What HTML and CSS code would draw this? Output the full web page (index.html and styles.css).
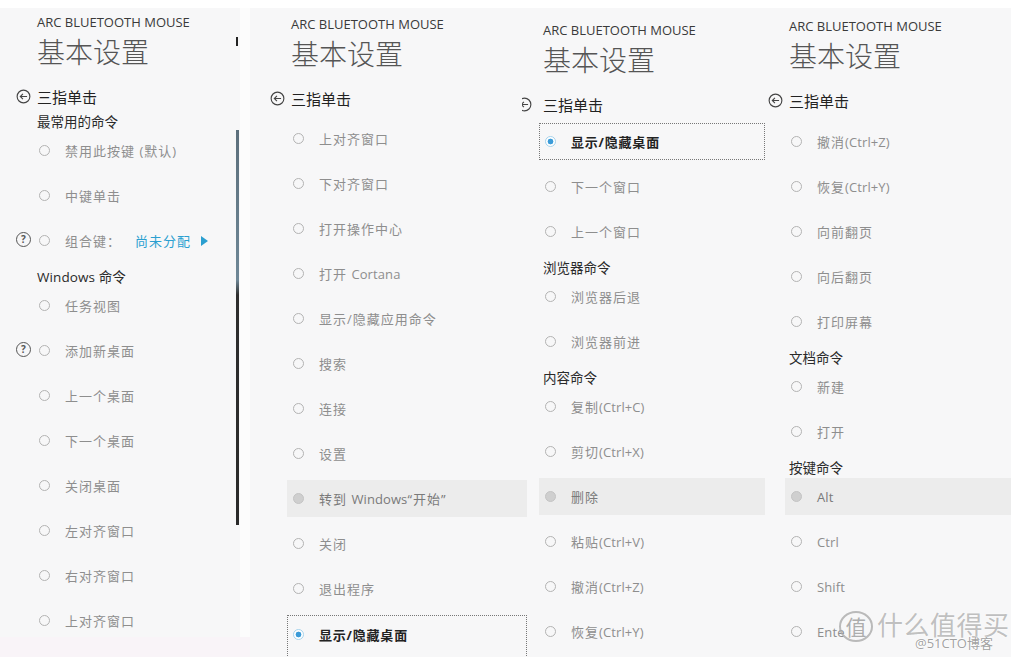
FILE: index.html
```html
<!DOCTYPE html>
<html lang="zh-CN">
<head>
<meta charset="utf-8">
<title>ARC BLUETOOTH MOUSE 基本设置</title>
<link rel="stylesheet" href="styles.css">
</head>
<body>
<div class="topstrip"></div>
<div class="collage">

  <!-- Panel 1 -->
  <section class="panel p1">
    <div class="sheet">
      <div class="dev">ARC BLUETOOTH MOUSE</div>
      <h1 class="page">基本设置</h1>
      <div class="back"><svg class="back-ico" viewBox="0 0 16 16"><circle cx="8" cy="8" r="6.8"/><path d="M11.8 8H4.6M7.4 5.2 4.6 8l2.8 2.8"/></svg><span>三指单击</span></div>
      <ul class="list">
        <li class="group">最常用的命令</li>
        <li class="item"><div class="box"><span class="radio"></span><span class="label">禁用此按键 (默认)</span></div></li>
        <li class="item"><div class="box"><span class="radio"></span><span class="label">中键单击</span></div></li>
        <li class="item"><span class="help">?</span><div class="box"><span class="radio"></span><span class="label">组合键：</span><span class="assign">尚未分配</span><span class="tri"></span></div></li>
        <li class="group"><span class="en">Windows</span> 命令</li>
        <li class="item"><div class="box"><span class="radio"></span><span class="label">任务视图</span></div></li>
        <li class="item"><span class="help">?</span><div class="box"><span class="radio"></span><span class="label">添加新桌面</span></div></li>
        <li class="item"><div class="box"><span class="radio"></span><span class="label">上一个桌面</span></div></li>
        <li class="item"><div class="box"><span class="radio"></span><span class="label">下一个桌面</span></div></li>
        <li class="item"><div class="box"><span class="radio"></span><span class="label">关闭桌面</span></div></li>
        <li class="item"><div class="box"><span class="radio"></span><span class="label">左对齐窗口</span></div></li>
        <li class="item"><div class="box"><span class="radio"></span><span class="label">右对齐窗口</span></div></li>
        <li class="item"><div class="box"><span class="radio"></span><span class="label">上对齐窗口</span></div></li>
      </ul>
      <div class="mark"></div>
      <div class="scrollbar"></div>
    </div>
  </section>

  <!-- Panel 2 -->
  <section class="panel p2">
    <div class="dev">ARC BLUETOOTH MOUSE</div>
    <h1 class="page">基本设置</h1>
    <div class="back"><svg class="back-ico" viewBox="0 0 16 16"><circle cx="8" cy="8" r="6.8"/><path d="M11.8 8H4.6M7.4 5.2 4.6 8l2.8 2.8"/></svg><span>三指单击</span></div>
    <ul class="list">
      <li class="item"><div class="box"><span class="radio"></span><span class="label">上对齐窗口</span></div></li>
      <li class="item"><div class="box"><span class="radio"></span><span class="label">下对齐窗口</span></div></li>
      <li class="item"><div class="box"><span class="radio"></span><span class="label">打开操作中心</span></div></li>
      <li class="item"><div class="box"><span class="radio"></span><span class="label">打开 <span class="en">Cortana</span></span></div></li>
      <li class="item"><div class="box"><span class="radio"></span><span class="label">显示/隐藏应用命令</span></div></li>
      <li class="item"><div class="box"><span class="radio"></span><span class="label">搜索</span></div></li>
      <li class="item"><div class="box"><span class="radio"></span><span class="label">连接</span></div></li>
      <li class="item"><div class="box"><span class="radio"></span><span class="label">设置</span></div></li>
      <li class="item hover"><div class="box"><span class="radio"></span><span class="label">转到 <span class="en">Windows</span>“开始”</span></div></li>
      <li class="item"><div class="box"><span class="radio"></span><span class="label">关闭</span></div></li>
      <li class="item"><div class="box"><span class="radio"></span><span class="label">退出程序</span></div></li>
      <li class="item selected cut"><div class="box"><span class="radio"></span><span class="label">显示/隐藏桌面</span></div></li>
    </ul>
  </section>

  <!-- Panel 3 -->
  <section class="panel p3">
    <div class="dev">ARC BLUETOOTH MOUSE</div>
    <h1 class="page">基本设置</h1>
    <div class="back"><svg class="back-ico" viewBox="0 0 16 16"><circle cx="8" cy="8" r="6.8"/><path d="M11.8 8H4.6M7.4 5.2 4.6 8l2.8 2.8"/></svg><span>三指单击</span></div>
    <ul class="list">
      <li class="item selected"><div class="box"><span class="radio"></span><span class="label">显示/隐藏桌面</span></div></li>
      <li class="item"><div class="box"><span class="radio"></span><span class="label">下一个窗口</span></div></li>
      <li class="item"><div class="box"><span class="radio"></span><span class="label">上一个窗口</span></div></li>
      <li class="group">浏览器命令</li>
      <li class="item"><div class="box"><span class="radio"></span><span class="label">浏览器后退</span></div></li>
      <li class="item"><div class="box"><span class="radio"></span><span class="label">浏览器前进</span></div></li>
      <li class="group">内容命令</li>
      <li class="item"><div class="box"><span class="radio"></span><span class="label">复制<span class="en">(Ctrl+C)</span></span></div></li>
      <li class="item"><div class="box"><span class="radio"></span><span class="label">剪切<span class="en">(Ctrl+X)</span></span></div></li>
      <li class="item hover"><div class="box"><span class="radio"></span><span class="label">删除</span></div></li>
      <li class="item"><div class="box"><span class="radio"></span><span class="label">粘贴<span class="en">(Ctrl+V)</span></span></div></li>
      <li class="item"><div class="box"><span class="radio"></span><span class="label">撤消<span class="en">(Ctrl+Z)</span></span></div></li>
      <li class="item"><div class="box"><span class="radio"></span><span class="label">恢复<span class="en">(Ctrl+Y)</span></span></div></li>
    </ul>
  </section>

  <!-- Panel 4 -->
  <section class="panel p4">
    <div class="dev">ARC BLUETOOTH MOUSE</div>
    <h1 class="page">基本设置</h1>
    <div class="back"><svg class="back-ico" viewBox="0 0 16 16"><circle cx="8" cy="8" r="6.8"/><path d="M11.8 8H4.6M7.4 5.2 4.6 8l2.8 2.8"/></svg><span>三指单击</span></div>
    <ul class="list">
      <li class="item"><div class="box"><span class="radio"></span><span class="label">撤消<span class="en">(Ctrl+Z)</span></span></div></li>
      <li class="item"><div class="box"><span class="radio"></span><span class="label">恢复<span class="en">(Ctrl+Y)</span></span></div></li>
      <li class="item"><div class="box"><span class="radio"></span><span class="label">向前翻页</span></div></li>
      <li class="item"><div class="box"><span class="radio"></span><span class="label">向后翻页</span></div></li>
      <li class="item"><div class="box"><span class="radio"></span><span class="label">打印屏幕</span></div></li>
      <li class="group">文档命令</li>
      <li class="item"><div class="box"><span class="radio"></span><span class="label">新建</span></div></li>
      <li class="item"><div class="box"><span class="radio"></span><span class="label">打开</span></div></li>
      <li class="group">按键命令</li>
      <li class="item hover"><div class="box"><span class="radio"></span><span class="label"><span class="en">Alt</span></span></div></li>
      <li class="item"><div class="box"><span class="radio"></span><span class="label"><span class="en">Ctrl</span></span></div></li>
      <li class="item"><div class="box"><span class="radio"></span><span class="label"><span class="en">Shift</span></span></div></li>
      <li class="item"><div class="box"><span class="radio"></span><span class="label"><span class="en">Ente</span></span></div></li>
    </ul>
    <div class="wm-circle">值</div>
    <div class="wm-text">什么值得买</div>
    <div class="wm-sub">@51CTO博客</div>
  </section>

</div>
</body>
</html>
```

FILE: styles.css
```css
* { box-sizing: border-box; }

html, body {
  margin: 0;
  padding: 0;
}

body {
  width: 1011px;
  height: 657px;
  overflow: hidden;
  background: #f7f7f8;
  font-family: "Open Sans", "Noto Sans CJK SC", sans-serif;
  color: #333;
}

.topstrip {
  height: 8px;
  background: #ffffff;
}

.collage {
  display: grid;
  grid-template-columns: 250px 272px 243px 246px;
  height: 649px;
}

.panel {
  position: relative;
  min-width: 0;
}

/* panel offsets */
.p1 {
  background: #f9f4f8;
}
.p1 .sheet {
  position: relative;
  height: 629px;
  overflow: hidden;
  padding: 6px 0 0 16px;
  background: linear-gradient(to right, #f7f7f8 240px, #fcfcfc 240px);
}
.p2 { padding: 8px 0 0 20px; }
.p3 { padding: 14px 0 0 0; overflow: hidden; }
.p4 { padding: 10px 0 0 3px; overflow: hidden; }

.dev {
  margin-left: 21px;
  height: 16px;
  line-height: 16px;
  font-size: 13px;
  color: #3a3a3a;
  white-space: nowrap;
}

.page {
  margin: 7px 0 0 21px;
  height: 30px;
  line-height: 30px;
  font-size: 28px;
  font-weight: 300;
  color: #555;
  white-space: nowrap;
}

.back {
  margin-top: 18px;
  height: 22px;
  display: flex;
  align-items: center;
  font-size: 15px;
  color: #222;
  white-space: nowrap;
}
.back-ico {
  width: 15px;
  height: 15px;
  margin-right: 6px;
  flex: none;
  fill: none;
  stroke: #444;
  stroke-width: 1.2;
}
.p3 .back-ico { margin-left: -5px; margin-right: 11px; }

.list {
  list-style: none;
  margin: 0;
  padding: 0;
}
.p1 .list { margin-top: 5px; }
.p2 .list { margin-top: 11px; margin-right: -5px; }
.p3 .list { margin-top: 8px; }
.p4 .list { margin-top: 12px; }

.group {
  margin-left: 21px;
  height: 20px;
  line-height: 20px;
  font-size: 13.5px;
  color: #2a2a2a;
  white-space: nowrap;
}

.item {
  height: 45px;
  display: flex;
  align-items: flex-start;
  padding-left: 17px;
}

.box {
  flex: 1;
  height: 37px;
  display: flex;
  align-items: center;
  padding-left: 5px;
  border: 1px solid transparent;
  white-space: nowrap;
}

.radio {
  flex: none;
  width: 11px;
  height: 11px;
  border-radius: 50%;
  border: 1px solid #b3b3b3;
}

.label {
  margin-left: 15px;
  font-size: 13px;
  letter-spacing: 1px;
  color: #8e8e8e;
}
.en { letter-spacing: 0.1px; }

.hover .box { background: #ececec; }
.hover .radio { background: #cfcfcf; border-color: #c4c4c4; }
.hover .label { color: #7a7a7a; }

.selected .box { border: 1px dotted #777; }
.selected .radio {
  border-color: #a6d3ec;
  background: radial-gradient(circle, #3b9bd8 0 2.6px, #ffffff 3.2px);
}
.selected .label { color: #222; font-weight: 700; letter-spacing: 0.8px; }

.cut .box {
  height: 45px;
  padding-bottom: 8px;
  border-bottom: 0;
}

.help {
  flex: none;
  margin: 10px 2px 0 -17px;
  width: 15px;
  height: 15px;
  border: 1.3px solid #555;
  border-radius: 50%;
  font-size: 10px;
  line-height: 12px;
  text-align: center;
  font-weight: 700;
  color: #555;
}

.assign {
  margin-left: 14px;
  font-size: 13px;
  letter-spacing: 1px;
  color: #2b9fd0;
}
.tri {
  margin-left: 10px;
  width: 0;
  height: 0;
  border-top: 5px solid transparent;
  border-bottom: 5px solid transparent;
  border-left: 7px solid #2b9fd0;
}

/* scrollbar of panel 1 */
.scrollbar {
  position: absolute;
  left: 236px;
  top: 122px;
  width: 3px;
  height: 395px;
  background: linear-gradient(to bottom, #5c6f7c 0, #6e8796 150px, #2e2e2e 165px, #2a2a2a 100%);
}
.mark {
  position: absolute;
  left: 236px;
  top: 29px;
  width: 2px;
  height: 9px;
  background: #222;
}

/* watermark */
.wm-circle {
  position: absolute;
  left: 74px;
  top: 603px;
  width: 34px;
  height: 31px;
  border: 2px solid rgba(170,170,170,0.8);
  border-radius: 50%;
  font-size: 21px;
  line-height: 27px;
  text-align: center;
  color: rgba(160,160,160,0.85);
  font-family: "Noto Sans CJK SC", sans-serif;
}
.wm-text {
  position: absolute;
  left: 112px;
  top: 597px;
  font-size: 26px;
  letter-spacing: 0.5px;
  color: rgba(175,175,175,0.8);
  font-family: "Noto Sans CJK SC", sans-serif;
  white-space: nowrap;
  text-shadow: 0 0 2px #fff;
}
.wm-sub {
  position: absolute;
  left: 150px;
  top: 625px;
  font-size: 13px;
  color: rgba(150,150,150,0.9);
  white-space: nowrap;
  text-shadow: 0 0 2px #fff, 0 0 2px #fff;
}
```
